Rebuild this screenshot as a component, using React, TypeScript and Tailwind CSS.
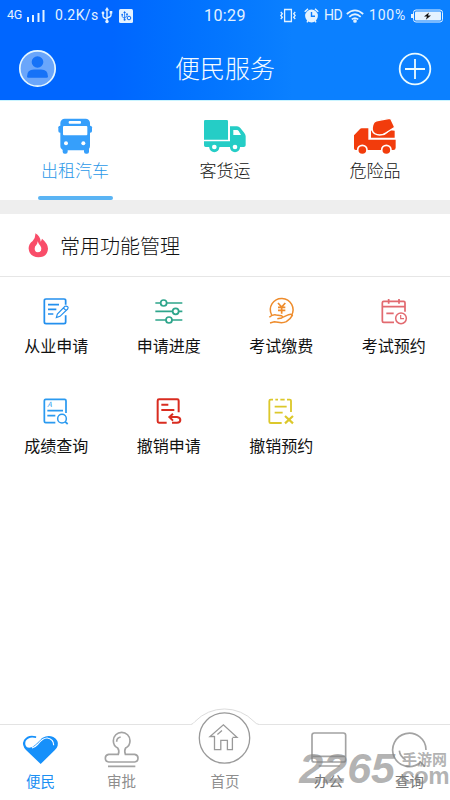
import type { ReactNode } from 'react';

/**
 * Service home screen
 * Status bar, category tabs, common function grid and bottom navigation
 */

interface Item {
  label: string;
  icon: ReactNode;
}

const BusIcon = () => (
  <svg className="w-9 h-[38px]" viewBox="0 0 108 114" fill="#369ffb">
    <rect x="10" y="5" width="89" height="95" rx="13" />
    <rect x="4" y="26" width="101" height="21" rx="5" />
    <rect x="17" y="90" width="15" height="20" rx="6" />
    <rect x="81" y="90" width="15" height="20" rx="6" />
    <rect x="35" y="12" width="37" height="8" rx="3" fill="#fff" />
    <rect x="18" y="27" width="73" height="28" rx="3" fill="#fff" />
    <circle cx="27" cy="79" r="6" fill="#fff" />
    <circle cx="79" cy="79" r="6" fill="#fff" />
  </svg>
);

const TruckIcon = () => (
  <svg className="w-12 h-[38px]" viewBox="0 0 144 114" fill="#25cdc6">
    <path d="M13 9H77Q81 9 81 13V68H9V13Q9 9 13 9Z" />
    <path d="M9 73H87V28H108Q114 28 118 33L130 48Q134 53 134 58V85Q134 90 128 90H14Q9 90 9 85Z" />
    <path d="M97 39H108Q111 39 113 42L120 54H97Z" fill="#fff" />
    <circle cx="40" cy="91" r="15" />
    <circle cx="40" cy="90" r="7" fill="#fff" />
    <circle cx="102" cy="91" r="15" />
    <circle cx="102" cy="90" r="7" fill="#fff" />
  </svg>
);

const MixerIcon = () => (
  <svg className="w-12 h-[38px]" viewBox="0 0 144 114" fill="#f23c0c">
    <path d="M9 55L27 36Q29 34 32 34H52V68H134V92Q134 99 127 99H14Q9 99 9 94Z" />
    <path d="M60 40V62H131V41L118 40L102 53Q83 60 60 40Z" />
    <path
      d="M70 15Q76 11 84 10L116 4Q119 4 120 7L130 28Q131 31 128 33L104 48Q87 59 71 50Q60 43 65 25Q67 18 70 15Z"
      stroke="#fff"
      strokeWidth="4"
    />
    <circle cx="34" cy="99" r="14" stroke="#fff" strokeWidth="5" />
    <circle cx="106" cy="99" r="14" stroke="#fff" strokeWidth="5" />
  </svg>
);

const FlameIcon = () => (
  <svg className="w-5 h-[25px]" viewBox="0 0 60 75">
    <path
      d="M22 1Q37 9 38 26Q41 22 42 17Q60 32 60 47Q58 73 31 73Q4 71 2 47Q1 34 14 24Q23 14 22 1Z"
      fill="#f94d69"
    />
    <path d="M29 25Q32 34 37 38Q43 46 39 53Q35 58 29 58Q20 56 20 47Q20 40 25 36Q29 31 29 25Z" fill="#fff" />
  </svg>
);

const LineIcon = ({ color, children }: { color: string; children: ReactNode }) => (
  <svg className="w-[30px] h-[30px]" viewBox="0 0 90 90" fill="none" stroke={color} strokeWidth="5.2">
    {children}
  </svg>
);

const categories: Item[] = [
  { label: '出租汽车', icon: <BusIcon /> },
  { label: '客货运', icon: <TruckIcon /> },
  { label: '危险品', icon: <MixerIcon /> },
];

const functions: Item[] = [
  {
    label: '从业申请',
    icon: (
      <LineIcon color="#2490ee">
        <path d="M74 23V11Q74 6 69 6H15Q10 6 10 11V75Q10 80 15 80H69Q74 80 74 75V55M21 23H54M21 37H46M21 51H37" />
        <path d="M46 62L49 51L72 28Q76 26 80 29Q83 32 80 36L57 58ZM67 33L75 40" strokeWidth="3.5" />
      </LineIcon>
    ),
  },
  {
    label: '申请进度',
    icon: (
      <LineIcon color="#2ea58b">
        <path d="M4 18H85M4 43H85M4 69H85" />
        <circle cx="29" cy="18" r="9" fill="#fff" />
        <circle cx="65" cy="43" r="9" fill="#fff" />
        <circle cx="45" cy="69" r="9" fill="#fff" />
      </LineIcon>
    ),
  },
  {
    label: '考试缴费',
    icon: (
      <LineIcon color="#ee8c2c">
        <path d="M17 54A34 34 0 1 1 76 56" strokeWidth="4.5" />
        <path d="M36 18L47 30L58 18M36 31H58M36 40H58M47 30V50" strokeWidth="5" />
        <path
          d="M10 61Q20 51 31 54L46 56Q52 59 47 63L34 65M48 62L68 53Q77 50 79 55Q75 64 61 74Q51 79 36 76L25 74L12 78"
          strokeWidth="4.5"
        />
      </LineIcon>
    ),
  },
  {
    label: '考试预约',
    icon: (
      <LineIcon color="#e26a70">
        <path d="M78 44V17Q78 13 74 13H14Q10 13 10 17V72Q10 76 14 76H45M10 29H78M29 6V20M60 6V20M22 49H44" />
        <circle cx="66" cy="64" r="16" strokeWidth="4.5" />
        <path d="M65 54V65H75" strokeWidth="3.5" />
      </LineIcon>
    ),
  },
  {
    label: '成绩查询',
    icon: (
      <LineIcon color="#2b9af0">
        <path d="M75 48V11Q75 7 71 7H14Q10 7 10 11V73Q10 77 14 77H43M19 41H66M19 56H43" />
        <text x="19" y="31" fontSize="22" fontStyle="italic" fill="#2b9af0" stroke="none">
          A
        </text>
        <circle cx="63" cy="65" r="13" strokeWidth="4.5" />
        <path d="M72 74L80 81" />
      </LineIcon>
    ),
  },
  {
    label: '撤销申请',
    icon: (
      <LineIcon color="#d92c20">
        <path d="M74 46V11Q74 7 70 7H15Q11 7 11 11V73Q11 77 15 77H38M22 23H43M22 39H61" strokeWidth="6" />
        <path d="M57 50L46 60L57 71M47 60H69Q79 61 79 69Q79 77 69 77H54" strokeWidth="6" />
      </LineIcon>
    ),
  },
  {
    label: '撤销预约',
    icon: (
      <LineIcon color="#dcc82b">
        <path d="M75 45V11Q75 8 71 8H63M56 8H43M36 8H28M21 8H14Q10 8 10 12V74Q10 78 14 78H47M26 29H62M26 47H50" strokeWidth="5.5" />
        <path d="M57 57L81 79M81 57L57 79" strokeWidth="6.5" />
      </LineIcon>
    ),
  },
];

const HeartIcon = () => (
  <svg className="w-[42px] h-[38px]" viewBox="0 0 126 114">
    <path
      d="M62 99L18 57Q4 42 12 27Q24 9 48 16L58 22Q64 24 68 20Q84 11 100 18Q117 28 113 44Q111 51 104 58Z"
      fill="#1690fa"
    />
    <path d="M48 21Q27 15 17 30Q13 42 21 49Q34 53 46 41L64 24L61 10H50Z" fill="#fff" />
    <path d="M36 51Q46 48 54 39Q69 20 82 21Q101 24 101 43" fill="none" stroke="#fff" strokeWidth="3.5" />
  </svg>
);

const StampIcon = () => (
  <svg className="w-10 h-[38px]" viewBox="0 0 120 114" fill="none" stroke="#a3a3a3" strokeWidth="5">
    <path d="M49 70Q53 59 47 51Q34 44 34 29A25 25 0 0 1 84 29Q84 44 71 51Q66 59 70 70H98Q108 72 108 81Q108 92 98 93H20Q10 92 10 81Q10 72 20 70Z" />
    <path d="M44 32Q44 20 56 18M18 106H100" />
  </svg>
);

// Home button sits on a bump that rises above the bar's top border
const HomeIcon = () => (
  <svg className="-mt-[21px] h-[62px] w-[126px]" viewBox="0 0 126 62" fill="none" stroke="#999" strokeWidth="1.3">
    <path d="M29 20.5A41 41 0 0 1 97 20.5V24H29Z" fill="#fff" stroke="none" />
    <path d="M29 20.5Q31 20 33 17.5A41 41 0 0 1 92 17.5Q94 20 97 20.5" stroke="#dcdcdc" strokeWidth="1" />
    <circle cx="62.5" cy="34" r="25.2" />
    <path d="M52.5 32.5H48L61.4 20.8L75 33.3H70.5M52.5 32V45.7H58.8V36.3H65.4V45.7H70.4V34M55.4 30.4L60 26.6" />
  </svg>
);

const MonitorIcon = () => (
  <svg className="w-10 h-[38px]" viewBox="0 0 120 114" fill="none" stroke="#a3a3a3" strokeWidth="5">
    <rect x="9" y="6" width="101" height="87" rx="7" />
    <path d="M9 76H110M29 105H92" />
  </svg>
);

const QueryIcon = () => (
  <svg className="w-[42px] h-[38px]" viewBox="0 0 126 114" fill="none" stroke="#a3a3a3" strokeWidth="5">
    <path d="M111 57A50 50 0 1 0 92 96M31 59Q33 77 50 86M92 91L108 107" />
  </svg>
);

const navItems: (Item & { className: string })[] = [
  { label: '便民', icon: <HeartIcon />, className: 'w-[81px] pt-1.5 text-[#1b8ff3]' },
  { label: '审批', icon: <StampIcon />, className: 'w-[81px] pt-1.5 text-[#8e8e8e]' },
  { label: '首页', icon: <HomeIcon />, className: 'w-[126px] text-[#8e8e8e]' },
  { label: '办公', icon: <MonitorIcon />, className: 'w-[81px] pt-1.5 text-[#777]' },
  { label: '查询', icon: <QueryIcon />, className: 'w-[81px] pt-1.5 text-[#777]' },
];

const UsbGlyph = () => (
  <>
    <path d="M6 2V15M2 6V9Q2 11 6 12M10 5V8Q10 10 6 11" fill="none" stroke="currentColor" strokeWidth="1.4" />
    <path d="M6 0L8.2 3.4H3.8Z" />
    <circle cx="6" cy="14.5" r="1.7" />
    <circle cx="2" cy="6" r="1.4" />
    <rect x="8.7" y="4" width="2.6" height="2.6" />
  </>
);

function StatusBar() {
  return (
    <div className="flex h-[31px] items-center whitespace-nowrap font-[Roboto,sans-serif] text-[#e4f2ff]">
      <span className="ml-[7px] w-5 text-[12.5px] tracking-[-0.2px]">4G</span>
      <svg className="h-[14px] w-[19px]" viewBox="0 0 19 14" fill="currentColor">
        <path d="M0 8H2V13H0ZM5 6H7V13H5ZM10.5 4H12.5V13H10.5ZM15.5 1H17.5V13H15.5Z" />
      </svg>
      <span className="ml-[9px] w-[46px] text-[14px] tracking-[0.4px]">0.2K/s</span>
      <svg className="h-[17px] w-3" viewBox="0 0 12 17" fill="currentColor">
        <UsbGlyph />
      </svg>
      <svg className="ml-1.5 h-[14px] w-[14px]" viewBox="0 0 14 14" fill="currentColor">
        <rect width="14" height="14" rx="1.5" />
        <g className="text-[#0b6cf4]" fill="currentColor" transform="translate(2 2) scale(.6)">
          <UsbGlyph />
        </g>
        <circle cx="10" cy="9" r="1.8" fill="none" stroke="#0b6cf4" />
      </svg>
      <span className="ml-[71px] w-[76px] text-[16px] tracking-[0.4px]">10:29</span>
      <svg className="h-[15px] w-4" viewBox="0 0 16 15" fill="none" stroke="currentColor" strokeWidth="1.3">
        <path d="M4.6 1.5H11.4V13.5H4.6ZM.8 4L2.3 5.8L.8 7.5L2.3 9.2L.8 11M15.2 4L13.7 5.8L15.2 7.5L13.7 9.2L15.2 11" />
      </svg>
      <svg className="ml-2 h-[15px] w-[15px]" viewBox="0 0 15 15" fill="currentColor">
        <circle cx="7.5" cy="8" r="6.4" />
        <path d="M.7 3.8L4 .9M14.3 3.8L11 .9M3 14.3L4 12.5M12 14.3L11 12.5" stroke="currentColor" strokeWidth="1.4" />
        <path d="M7.5 4V8.3H11" fill="none" stroke="#0b7cff" strokeWidth="1.4" />
      </svg>
      <span className="ml-[5px] w-[22px] text-[14px] tracking-[-0.6px]">HD</span>
      <svg className="h-[14px] w-[18px]" viewBox="0 0 18 14" fill="none" stroke="currentColor" strokeWidth="1.7">
        <path d="M.8 5Q9-2.4 17.2 5M3.3 7.8Q9 2.7 14.7 7.8M5.8 10.4Q9 7.7 12.2 10.4" />
        <circle cx="9" cy="12" r="1" />
      </svg>
      <span className="ml-[5px] w-[42px] text-[14px] tracking-[0.8px]">100%</span>
      <svg className="h-[14px] w-8" viewBox="0 0 32 14" fill="currentColor">
        <rect x="2.5" y="1" width="29" height="12" rx="2.5" fill="none" stroke="currentColor" />
        <rect x="4" y="2.5" width="26" height="9" rx="1" />
        <path d="M0 5H2V9H0Z" />
        <path d="M18 3.5L13 7.6H16L14.8 10.8L20 6.4H17Z" fill="#111" />
      </svg>
    </div>
  );
}

function Header() {
  return (
    <header className="h-[101px] border-b border-[#c9f4ff] bg-linear-to-r from-[#0066ff] from-25% to-[#0b80ff] to-65%">
      <StatusBar />
      <div className="flex h-[75px] items-center justify-between px-[18px]">
        <svg className="h-[39px] w-[39px]" viewBox="0 0 39 39" fill="#1672f7">
          <circle cx="19.5" cy="19.5" r="17.7" fill="#6aa6fb" stroke="#e5f7ff" strokeWidth="1.7" />
          <circle cx="19.5" cy="13" r="5.8" />
          <path d="M9 27.5Q9 20.5 16 20.5H23Q30 20.5 30 27.5Q30 28.8 28.5 28.8H10.5Q9 28.8 9 27.5Z" />
        </svg>
        <h1 className="mr-[5px] pb-0.5 text-[25px] leading-none font-light text-[#f4fbff]">便民服务</h1>
        <svg className="h-[34px] w-[34px]" viewBox="0 0 34 34" fill="none" stroke="#e9faff" strokeWidth="1.8">
          <circle cx="17" cy="17" r="15.3" />
          <path d="M17 7V27M7 17H27" />
        </svg>
      </div>
    </header>
  );
}

export default function App() {
  return (
    <div className="relative flex h-[800px] w-[450px] flex-col overflow-hidden bg-white font-['Noto_Sans_CJK_SC',sans-serif]">
      <Header />

      {/* Category tabs */}
      <div className="grid h-[99px] grid-cols-3">
        {categories.map((item, index) => (
          <div
            key={item.label}
            className={`flex flex-col items-center pt-4 text-[17px] font-light ${index === 0 ? 'text-[#2b98e8]' : 'text-[#111]'}`}
          >
            {item.icon}
            <span className="mt-0.5 h-[39px] leading-[25px]">{item.label}</span>
            {index === 0 && <div className="h-1 w-[75px] rounded-full bg-[#5ab4f4]" />}
          </div>
        ))}
      </div>

      {/* Section title */}
      <div className="h-[14px] bg-[#eeeeee]" />
      <div className="flex h-[63px] items-center border-b border-[#e6e6e6] pl-7 text-[20px] font-light text-[#111]">
        <FlameIcon />
        <h2 className="ml-3 pt-px">常用功能管理</h2>
      </div>

      {/* Function grid */}
      <div className="grid auto-rows-[100px] grid-cols-4 pt-5 text-[16px] text-[#111]">
        {functions.map((item) => (
          <div key={item.label} className="flex flex-col items-center gap-1.5">
            {item.icon}
            <span className="leading-6">{item.label}</span>
          </div>
        ))}
      </div>

      {/* Bottom navigation */}
      <nav className="mt-auto flex h-[76px] border-t border-[#e3e3e3]">
        {navItems.map((item) => (
          <div key={item.label} className={`flex flex-col items-center text-[14.5px] ${item.className}`}>
            {item.icon}
            <span className="mt-auto pb-[9px] leading-5">{item.label}</span>
          </div>
        ))}
      </nav>

      {/* Site watermark over the navigation */}
      <div className="absolute right-0 bottom-[14px] flex items-end font-['Liberation_Sans',sans-serif] font-bold text-[#808080]/60">
        <span className="text-[43px] leading-[36px] italic">2265</span>
        <div className="flex w-[55px] flex-col">
          <span className="pl-[7px] font-['Noto_Sans_CJK_SC',sans-serif] text-[15px] leading-[15px]">手游网</span>
          <span className="text-[24px] leading-[20px] tracking-[-0.5px]">.com</span>
        </div>
      </div>
    </div>
  );
}
